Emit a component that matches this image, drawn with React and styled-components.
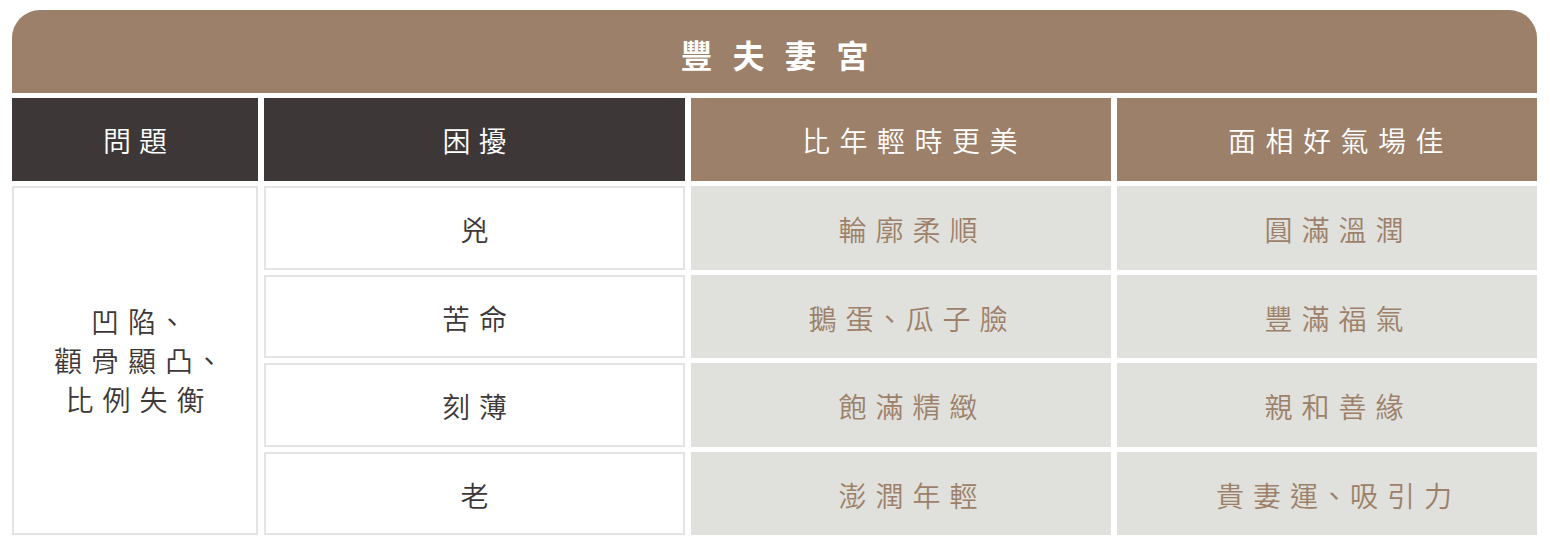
import React from 'react'
import styled, { createGlobalStyle } from 'styled-components'

const GlobalStyle = createGlobalStyle`
  body {
    margin: 0;
    background: #fff;
    font-family: "Noto Sans CJK TC", "Noto Sans", sans-serif;
  }
`

const Wrapper = styled.div`
  padding: 10px 13px 8px 12px;
`

const Title = styled.div`
  height: 83px;
  box-sizing: border-box;
  background: #9c8069;
  border-radius: 28px 28px 0 0;
  display: flex;
  align-items: center;
  justify-content: center;
  color: #fff;
  font-size: 32px;
  font-weight: 700;
  letter-spacing: 20px;
  padding: 4px 0 0 20px;
  margin-bottom: 5px;
`

const Grid = styled.div`
  display: grid;
  grid-template-columns: 246px 421px 420px 420px;
  grid-template-rows: 83px repeat(4, 83.5px);
  column-gap: 6px;
  row-gap: 5px;
  font-feature-settings: "palt";
`

const HeadCell = styled.div`
  background: ${p => (p.$dark ? '#3d3837' : '#9c8069')};
  color: #fff;
  display: flex;
  align-items: center;
  justify-content: center;
  font-size: 28px;
  font-weight: 350;
  letter-spacing: ${p => (p.$dark ? '8px' : '9.5px')};
  padding-left: ${p => (p.$dark ? '8px' : '27px')};
`

const Cell = styled.div`
  box-sizing: border-box;
  display: flex;
  align-items: center;
  justify-content: center;
  text-align: center;
  font-size: 28px;
  font-weight: 350;
  letter-spacing: 9px;
  padding: ${p => (p.$span ? '0 0 0 9px' : p.$shade ? '4px 0 0 23px' : '4px 0 0 9px')};
  line-height: 39px;
  background: ${p => (p.$shade ? '#e0e0dc' : '#fff')};
  color: ${p => (p.$shade ? '#9c8069' : '#3d3837')};
  border: ${p => (p.$shade ? 'none' : '2px solid #e4e4e2')};
  grid-row: ${p => p.$span || 'auto'};
`

const rows = [
  ['兇', '輪廓柔順', '圓滿溫潤'],
  ['苦命', '鵝蛋、瓜子臉', '豐滿福氣'],
  ['刻薄', '飽滿精緻', '親和善緣'],
  ['老', '澎潤年輕', '貴妻運、吸引力'],
]

export default function App() {
  return (
    <Wrapper>
      <GlobalStyle />
      <Title>豐夫妻宮</Title>
      <Grid>
        <HeadCell $dark>問題</HeadCell>
        <HeadCell $dark>困擾</HeadCell>
        <HeadCell>比年輕時更美</HeadCell>
        <HeadCell>面相好氣場佳</HeadCell>
        <Cell $span="2 / span 4">
          凹陷、
          <br />
          顴骨顯凸、
          <br />
          比例失衡
        </Cell>
        {rows.map((r, i) => (
          <React.Fragment key={i}>
            <Cell>{r[0]}</Cell>
            <Cell $shade>{r[1]}</Cell>
            <Cell $shade>{r[2]}</Cell>
          </React.Fragment>
        ))}
      </Grid>
    </Wrapper>
  )
}
